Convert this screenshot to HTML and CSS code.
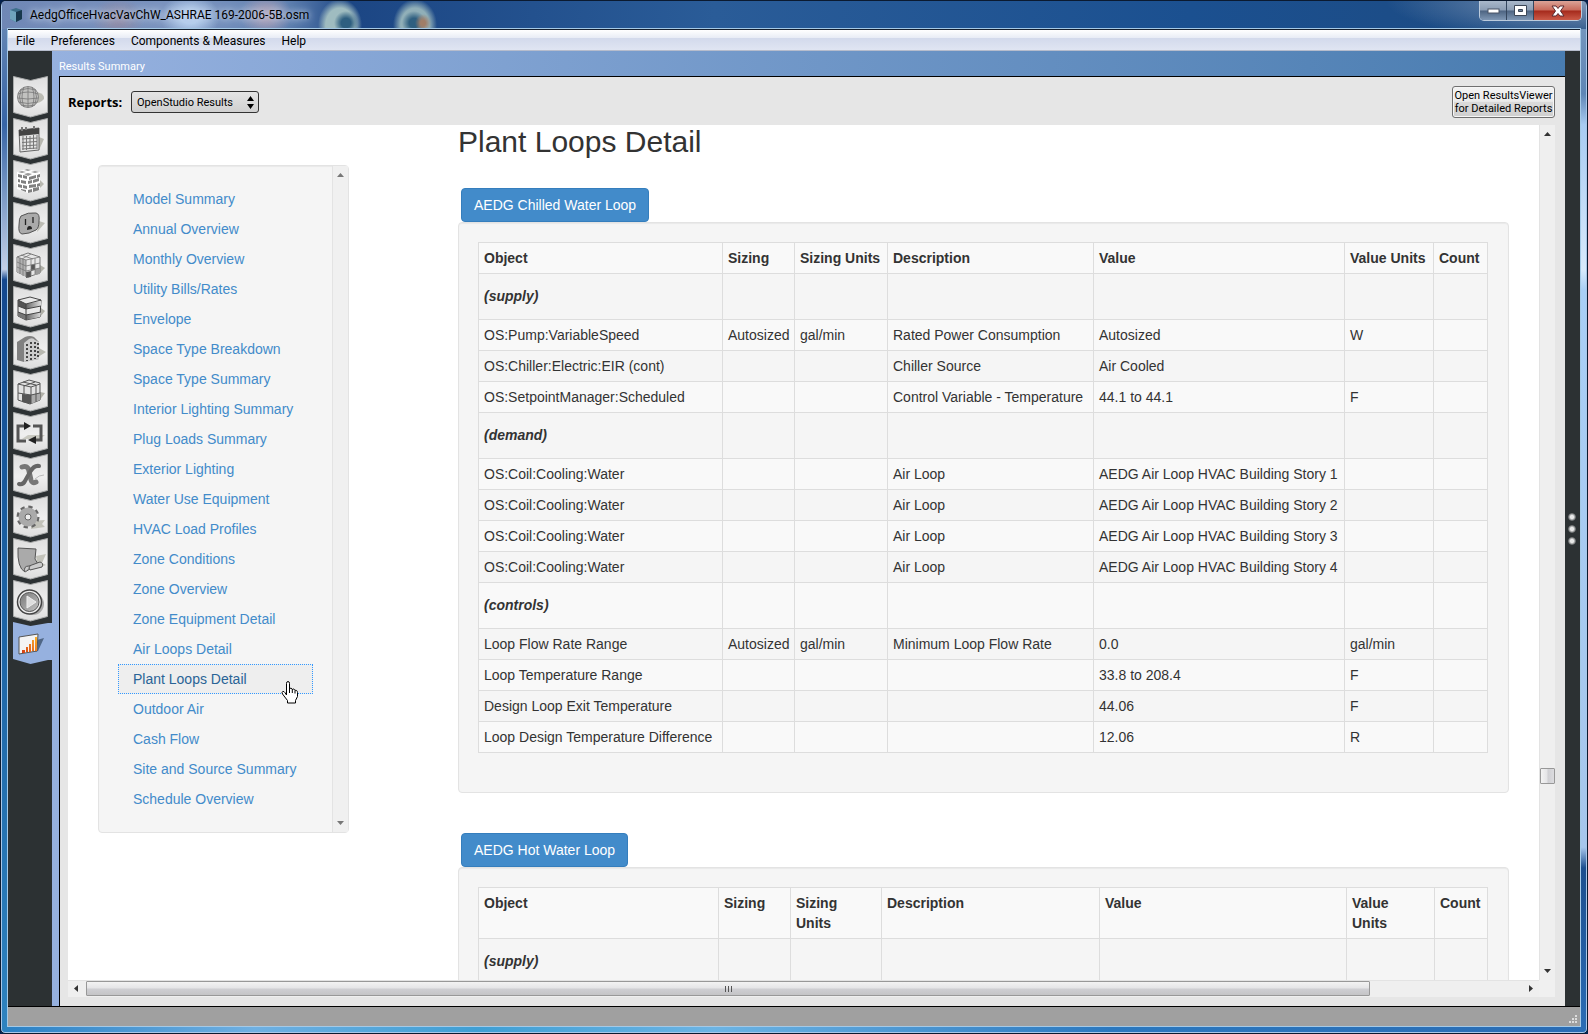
FILE: index.html
```html
<!DOCTYPE html>
<html lang="en">
<head>
  <meta charset="UTF-8" />
  <meta name="viewport" content="width=device-width, initial-scale=1" />
  <title>AedgOfficeHvacVavChW_ASHRAE 169-2006-5B.osm</title>
  <link rel="stylesheet" href="styles.css">
</head>
<body>
  <svg class="defs" width="0" height="0" aria-hidden="true">
    <defs>
      <linearGradient id="tabFill" x1="0" y1="0" x2="0" y2="1">
        <stop offset="0" stop-color="#dedede"/><stop offset=".55" stop-color="#efefef"/><stop offset="1" stop-color="#dcdcdc"/>
      </linearGradient>
      <linearGradient id="metal" x1="0" y1="0" x2="1" y2="1">
        <stop offset="0" stop-color="#777"/><stop offset="1" stop-color="#c4c4c4"/>
      </linearGradient>
      <linearGradient id="band" x1="0" y1="0" x2="1" y2="0">
        <stop offset="0" stop-color="#666"/><stop offset="1" stop-color="#ddd"/>
      </linearGradient>
      <linearGradient id="bars" x1="0" y1="1" x2="1" y2="0">
        <stop offset="0" stop-color="#d43a12"/><stop offset="1" stop-color="#fdb52b"/>
      </linearGradient>
      <path id="tab" d="M.5 .5 17.5 4.500 34.500 .5V36.500L17.500 41 .5 36.500Z" fill="url(#tabFill)" stroke="#a9abab"/>
    </defs>
  </svg>

  <div class="window">
    <header class="titlebar">
      <svg class="app-icon" viewBox="0 0 14 14"><path d="M1 2 7 0l6 2v9l-6 3-6-3Z" fill="#3d6f8a"/><path d="M1 2l6 2v10l-6-3Z" fill="#6fa5bd"/><path d="M7 4l6-2v9l-6 3Z" fill="#17384c"/></svg>
      <span class="title">AedgOfficeHvacVavChW_ASHRAE 169-2006-5B.osm</span>
      <div class="window-buttons">
        <button class="win-btn" aria-label="Minimize"><svg width="13" height="7"><rect x="1" y="2" width="11" height="4" fill="#fff" stroke="#4a5566"/></svg></button>
        <button class="win-btn" aria-label="Maximize"><svg width="13" height="11"><path d="M.5 .5h12v10H.5Z M4.500 4.500h4v2h-4Z" fill="#fff" fill-rule="evenodd" stroke="#3c4757"/></svg></button>
        <button class="win-btn close" aria-label="Close"><svg width="14" height="12"><path d="M1 1h4l2 2.500 2-2.500h4L9.500 6l3.500 5H9L7 8.500 5 11H1l3.500-5Z" fill="#fff" stroke="#5b2a30"/></svg></button>
      </div>
    </header>

    <div class="frame">
      <nav class="menubar">
        <a href="#">File</a>
        <a href="#">Preferences</a>
        <a href="#">Components &amp; Measures</a>
        <a href="#">Help</a>
      </nav>

      <div class="workspace">
        <aside class="tabs">
          <button class="tab" aria-label="Site"><svg viewBox="0 0 35 42"><use href="#tab"/><path d="M24 16q8 2 7 7-3 4-11 5Z" fill="#bcbcb4"/><circle cx="15" cy="21" r="10.500" fill="#c2c2c0" stroke="#888"/><path d="M5 18q10-4 20 0M4.500 22q10 2 21 0M5.500 26q9 3 19 0M8 29q7 2 14 0M7 14q8-3 16 0M15 10.500v21M11 11q-4 10 0 20M19 11q4 10 0 20M8 14q-3 7 0 14M22 14q3 7 0 14" fill="none" stroke="#777" stroke-width=".8"/></svg></button>
          <button class="tab" aria-label="Schedules"><svg viewBox="0 0 35 42"><use href="#tab"/><path d="M26 19l5 2-5 11Z" fill="#b8b8b0"/><path d="M6 12l20-2 0 22-19 2Z" fill="#e4e4e4" stroke="#666"/><path d="M6 12l20-2v6L6 18Z" fill="#444"/><path d="M9 13V9M13 12V9M21 11V8" stroke="#777" stroke-width="2"/><path d="M9 21l15-1M9 24.500l15-1M9 28l15-1M9 31l15-1M10 18v14M13.500 18v14M17 18v13M20.500 17v14M24 17v14" stroke="#777" stroke-width="1"/></svg></button>
          <button class="tab" aria-label="Constructions"><svg viewBox="0 0 35 42"><use href="#tab"/><path d="M26 19l5 5-7 7Z" fill="#b8b8b0"/><path d="M4 12l9-3 14 3v17l-12 4-11-4Z" fill="#fff"/><path d="M5 12l4-1 4 1-4 1ZM11 10l3-1 4 1-3 1ZM11 14l4-1 4 1-4 2ZM18 12l4-1 4 1-4 1Z" fill="#999"/><path d="M5 14l4 1v3l-4-1ZM10 15l4 1v3l-4-1ZM5 19l2 .5v3L5 22ZM8 20l5 1v3l-5-1ZM5 24l4 1v3l-4-1ZM10 25l4 1v3l-4-1ZM8 29l5 1v2l-5-2ZM16 17l7-2v3l-7 2ZM24 15l3-1v3l-3 1ZM15 21l4-1v3l-4 1ZM20 20l6-2v3l-6 2ZM16 25l7-1v3l-7 1ZM24 24l3-1v3l-3 1ZM15 30l4-1v3l-4 1ZM20 28l6-1v3l-6 2Z" fill="#808080"/></svg></button>
          <button class="tab" aria-label="Loads"><svg viewBox="0 0 35 42"><use href="#tab"/><path d="M26 19l6 2-8 9Z" fill="#bcbcb4"/><path d="M8 14q7-4 15-3 4 1 3 8 0 7-3 9-7 4-14 4-4-1-3-9 0-7 2-9Z" fill="#aaa" stroke="#555"/><path d="M12.500 17v6M20 15v6" stroke="#222" stroke-width="1.300"/><path d="M14 28q0-4 2.500-4t2.500 3Z" fill="#222"/></svg></button>
          <button class="tab" aria-label="Space Types"><svg viewBox="0 0 35 42"><use href="#tab"/><path d="M27 21l5 3-6 6Z" fill="#b0b0a8"/><path d="M4 13l11-4 12 4v16l-12 4-11-5Z" fill="#e6e6e6" stroke="#777"/><path d="M4 13l9 3v17L4 28Z" fill="#b2b2b2"/><path d="M13 28l5-1v6l-5 1ZM18 21l4-1v6l-4 1Z" fill="#555"/><path d="M22 25l5-1v6l-5 1Z" fill="#999"/><path d="M4 13l9 3 14-3M13 16v17M4 18l9 4 14-3M4 23l9 4 14-3M7 14v16M10 15v17M18 15v17M22 14v16M8 11l12 4M18 10l-9 5" fill="none" stroke="#777" stroke-width=".8"/></svg></button>
          <button class="tab" aria-label="Geometry"><svg viewBox="0 0 35 42"><use href="#tab"/><path d="M28 22l4 3-5 6Z" fill="#b0b0a8"/><path d="M5 14l12-3 11 3-1 17-14 3-8-4Z" fill="#e8e8e8" stroke="#444"/><path d="M5 14l8 4v5l-8-3Z" fill="#555"/><path d="M13 18l15-3v5l-15 3Z" fill="url(#band)"/><path d="M5 26l8 3v5l-8-4Z" fill="#777"/><path d="M13 29l15-3-1 5-14 3Z" fill="url(#band)"/><path d="M5 14l8 4 15-4M5 20l8 3 15-3M5 26l8 3 15-3M13 18v16" fill="none" stroke="#444"/></svg></button>
          <button class="tab" aria-label="Facility"><svg viewBox="0 0 35 42"><use href="#tab"/><path d="M26 20l7 4-8 5Z" fill="#b8b8b0"/><path d="M4 32V14l8-5q5-2 9 0l5 5v17l-15 3Z" fill="#808080"/><path d="M11 34V15l5-4q4-2 6 1l4 2v17Z" fill="#ccc"/><path d="M14 16v17M18 14v18M22 14v17M25 15v15" stroke="#444" stroke-width="2" stroke-dasharray="2 2"/></svg></button>
          <button class="tab" aria-label="Spaces"><svg viewBox="0 0 35 42"><use href="#tab"/><path d="M27 22l5 1-6 8Z" fill="#b0b0a8"/><path d="M5 14l11-4 11 3v17l-10 4-12-4Z" fill="#e2e2e2" stroke="#555"/><path d="M9 24l9 1v9l-9-2Z" fill="#555"/><path d="M18 25l9-2v7l-9 4Z" fill="#aaa"/><path d="M5 14l13 3 9-3M18 17v17M5 23l13 2 9-2M11 15v17M23 15v17M10 12l13 3M22 12l-11 4" fill="none" stroke="#555"/></svg></button>
          <button class="tab" aria-label="Thermal Zones"><svg viewBox="0 0 35 42"><use href="#tab"/><path d="M9 27h18l5-4H15Z" fill="#c8c8c0"/><path d="M12 14H5v15h8M20 14h8v14h-5" fill="none" stroke="#555" stroke-width="3"/><path d="M11 10l7 4-7 4ZM23 24l-8 4 8 4Z" fill="#222"/></svg></button>
          <button class="tab" aria-label="HVAC Systems"><svg viewBox="0 0 35 42"><use href="#tab"/><path d="M22 25q4-4 9-4" fill="none" stroke="#bbb"/><path d="M9 13q6-2 7 4l2 9q1 4 5 2" fill="none" stroke="#777" stroke-width="5" stroke-linecap="round"/><path d="M26 12q-5-1-9 6l-5 9q-2 4-6 3" fill="none" stroke="#666" stroke-width="4" stroke-linecap="round"/></svg></button>
          <button class="tab" aria-label="Simulation Settings"><svg viewBox="0 0 35 42"><use href="#tab"/><path d="M18 25l14-1-3 4 3 3-14 2Z" fill="#c2c2ba"/><circle cx="15" cy="21" r="9.500" fill="none" stroke="#666" stroke-width="4" stroke-dasharray="4 3.460"/><circle cx="15" cy="21" r="6" fill="none" stroke="#aaa" stroke-width="7"/><circle cx="15" cy="21" r="3" fill="#eee" stroke="#666"/></svg></button>
          <button class="tab" aria-label="Measures"><svg viewBox="0 0 35 42"><use href="#tab"/><path d="M23 18l10-2-4 9 4 2-8 3Z" fill="#c2c2ba"/><path d="M5 10l18 1-1 10 3 5-13 8Q4 30 5 10Z" fill="#aaa" stroke="#555"/><path d="M12 34q-2-6 4-6l11-4q4 1 2 5l-12 3q-2-2 0-4" fill="#ccc" stroke="#555"/></svg></button>
          <button class="tab" aria-label="Run Simulation"><svg viewBox="0 0 35 42"><use href="#tab"/><circle cx="20" cy="24" r="11" fill="#aaa"/><circle cx="16.500" cy="22" r="12" fill="#eee" stroke="#444" stroke-width="1.500"/><circle cx="16.500" cy="22" r="9.500" fill="url(#metal)" stroke="#555"/><path d="M14 16l9 6-9 6Z" fill="#ddd" stroke="#eee"/></svg></button>
          <button class="tab selected" aria-label="Results Summary"><svg viewBox="0 0 39 42"><path d="M0 0 17.500 4 35 1h4v37h-4L17.500 42 0 37Z" fill="#96b1df"/><path d="M24 18l7-2-6 13-3 1Z" fill="#4f6685"/><path d="M6 15l19-3-1 17-18 3Z" fill="#f4f4f4" stroke="#555"/><path d="M9 28h3v3H9ZM13 25h2v5h-2ZM16 22h2v8h-2ZM19 18h2v11h-2ZM22 15h2v14h-2Z" fill="url(#bars)"/></svg></button>
        </aside>

        <section class="results">
          <h1 class="results-title">Results Summary</h1>
          <div class="results-body">
            <div class="toolbar">
              <label for="report">Reports:</label>
              <span class="select-wrap">
                <select id="report"><option>OpenStudio Results</option></select>
                <svg width="7" height="13"><path d="M3.500 0 7 5H0ZM3.500 13 7 8H0Z"/></svg>
              </span>
              <button class="open-viewer">Open ResultsViewer<br>for Detailed Reports</button>
            </div>

            <div class="view">
              <div class="page">
                <nav class="toc">
                  <ul>
                    <li><a href="#">Model Summary</a></li>
                    <li><a href="#">Annual Overview</a></li>
                    <li><a href="#">Monthly Overview</a></li>
                    <li><a href="#">Utility Bills/Rates</a></li>
                    <li><a href="#">Envelope</a></li>
                    <li><a href="#">Space Type Breakdown</a></li>
                    <li><a href="#">Space Type Summary</a></li>
                    <li><a href="#">Interior Lighting Summary</a></li>
                    <li><a href="#">Plug Loads Summary</a></li>
                    <li><a href="#">Exterior Lighting</a></li>
                    <li><a href="#">Water Use Equipment</a></li>
                    <li><a href="#">HVAC Load Profiles</a></li>
                    <li><a href="#">Zone Conditions</a></li>
                    <li><a href="#">Zone Overview</a></li>
                    <li><a href="#">Zone Equipment Detail</a></li>
                    <li><a href="#">Air Loops Detail</a></li>
                    <li><a href="#plant-loops" class="active">Plant Loops Detail</a>
                      <svg class="cursor" width="18" height="23" viewBox="0 0 18 23"><path d="M5.500 14V2.500q0-2 1.500-2t1.500 2V8q.5-1 1.500-.8 1.200.2 1.300 1.500.6-1 1.600-.6 1 .4 1.100 1.600.7-.8 1.600-.2.900.7.900 2v4l-2 4v2.500h-8V19.500L1.500 13q-1-2 .3-2.600 1.200-.3 2.200 1.300Z" fill="#fff" stroke="#000"/><path d="M8.500 8v4M11.300 8.500V12M14 10v2.500" stroke="#000"/></svg>
                    </li>
                    <li><a href="#">Outdoor Air</a></li>
                    <li><a href="#">Cash Flow</a></li>
                    <li><a href="#">Site and Source Summary</a></li>
                    <li><a href="#">Schedule Overview</a></li>
                  </ul>
                  <div class="toc-scroll">
                    <svg width="7" height="4"><path d="M0 4 3.500 0 7 4Z"/></svg>
                    <svg width="7" height="4"><path d="M0 0 3.500 4 7 0Z"/></svg>
                  </div>
                </nav>

                <main class="report" id="plant-loops">
                  <h2>Plant Loops Detail</h2>

                  <section class="loop">
                    <button class="loop-btn">AEDG Chilled Water Loop</button>
                    <div class="well">
                      <table class="chilled">
                        <colgroup><col class="c-object"><col class="c-sizing"><col class="c-sunits"><col class="c-desc"><col class="c-value"><col class="c-vunits"><col class="c-count"></colgroup>
                        <thead>
                          <tr><th>Object</th><th>Sizing</th><th>Sizing Units</th><th>Description</th><th>Value</th><th>Value Units</th><th>Count</th></tr>
                        </thead>
                        <tbody>
                          <tr class="group"><td>(supply)</td><td></td><td></td><td></td><td></td><td></td><td></td></tr>
                          <tr><td>OS:Pump:VariableSpeed</td><td>Autosized</td><td>gal/min</td><td>Rated Power Consumption</td><td>Autosized</td><td>W</td><td></td></tr>
                          <tr><td>OS:Chiller:Electric:EIR (cont)</td><td></td><td></td><td>Chiller Source</td><td>Air Cooled</td><td></td><td></td></tr>
                          <tr><td>OS:SetpointManager:Scheduled</td><td></td><td></td><td>Control Variable - Temperature</td><td>44.1 to 44.1</td><td>F</td><td></td></tr>
                          <tr class="group"><td>(demand)</td><td></td><td></td><td></td><td></td><td></td><td></td></tr>
                          <tr><td>OS:Coil:Cooling:Water</td><td></td><td></td><td>Air Loop</td><td>AEDG Air Loop HVAC Building Story 1</td><td></td><td></td></tr>
                          <tr><td>OS:Coil:Cooling:Water</td><td></td><td></td><td>Air Loop</td><td>AEDG Air Loop HVAC Building Story 2</td><td></td><td></td></tr>
                          <tr><td>OS:Coil:Cooling:Water</td><td></td><td></td><td>Air Loop</td><td>AEDG Air Loop HVAC Building Story 3</td><td></td><td></td></tr>
                          <tr><td>OS:Coil:Cooling:Water</td><td></td><td></td><td>Air Loop</td><td>AEDG Air Loop HVAC Building Story 4</td><td></td><td></td></tr>
                          <tr class="group"><td>(controls)</td><td></td><td></td><td></td><td></td><td></td><td></td></tr>
                          <tr><td>Loop Flow Rate Range</td><td>Autosized</td><td>gal/min</td><td>Minimum Loop Flow Rate</td><td>0.0</td><td>gal/min</td><td></td></tr>
                          <tr><td>Loop Temperature Range</td><td></td><td></td><td></td><td>33.8 to 208.4</td><td>F</td><td></td></tr>
                          <tr><td>Design Loop Exit Temperature</td><td></td><td></td><td></td><td>44.06</td><td>F</td><td></td></tr>
                          <tr><td>Loop Design Temperature Difference</td><td></td><td></td><td></td><td>12.06</td><td>R</td><td></td></tr>
                        </tbody>
                      </table>
                    </div>
                  </section>

                  <section class="loop">
                    <button class="loop-btn">AEDG Hot Water Loop</button>
                    <div class="well">
                      <table class="hot">
                        <colgroup><col class="c-object"><col class="c-sizing"><col class="c-sunits"><col class="c-desc"><col class="c-value"><col class="c-vunits"><col class="c-count"></colgroup>
                        <thead>
                          <tr><th>Object</th><th>Sizing</th><th>Sizing<br>Units</th><th>Description</th><th>Value</th><th>Value<br>Units</th><th>Count</th></tr>
                        </thead>
                        <tbody>
                          <tr class="group"><td>(supply)</td><td></td><td></td><td></td><td></td><td></td><td></td></tr>
                        </tbody>
                      </table>
                    </div>
                  </section>
                </main>
              </div>

              <div class="vscroll">
                <svg width="7" height="4"><path d="M0 4 3.500 0 7 4Z"/></svg>
                <span class="vtrack"><span class="vthumb"></span></span>
                <svg width="7" height="4"><path d="M0 0 3.500 4 7 0Z"/></svg>
              </div>
              <div class="hscroll">
                <svg width="4" height="7"><path d="M4 0 0 3.500 4 7Z"/></svg>
                <span class="htrack"><span class="hthumb"><svg width="9" height="6"><path d="M1.500 0v6M4.500 0v6M7.500 0v6" stroke="#555"/></svg></span></span>
                <svg width="4" height="7"><path d="M0 0 4 3.500 0 7Z"/></svg>
              </div>
              <div class="corner"></div>
            </div>
          </div>
        </section>

        <div class="drawer-handle"><i></i><i></i><i></i></div>
      </div>

      <footer class="statusbar">
        <svg width="9" height="9"><path d="M6 0h2v2H6ZM3 3h2v2H3ZM6 3h2v2H6ZM0 6h2v2H0ZM3 6h2v2H3ZM6 6h2v2H6Z" fill="#ddd"/></svg>
      </footer>
    </div>
  </div>
</body>
</html>
```
FILE: styles.css
```css
* {
  box-sizing: border-box;
}

body {
  margin: 0;
  background: #04204c;
  font-family: "Liberation Sans", Arial, sans-serif;
  font-size: 14px;
  line-height: 20px;
  color: #333;
}

button,
select {
  margin: 0;
  padding: 0;
  font: inherit;
  color: inherit;
}

.defs {
  display: block;
}

/* window frame */
.window {
  height: 100vh;
  display: flex;
  flex-direction: column;
  padding: 0 7px 7px;
  border: 1px solid #0b1a30;
  border-radius: 6px 6px 5px 5px;
  box-shadow: inset 0 0 0 1px #a9c7e8;
  overflow: hidden;
  background:
    linear-gradient(#6f8db6, #3765a6 12%, #c3d0e6 26%, #14488e 27%, #1a5c9e 50%, #2e83c0) left / 8px 100% no-repeat,
    linear-gradient(#7b9bc0, #5f86b5 9%, #a8cbf2 12%, #d8eafc 26%, #a9cff6 28%, #a6c6ec 82%, #1d4f8f 84%, #2b6db6) right / 8px 100% no-repeat,
    linear-gradient(90deg, #2a80c4, #6fb0e2 16%, #3f9fd4 30%, #6cb4e4 45%, #2b78bf 70%, #2a6cb4) bottom / 100% 8px no-repeat,
    #1b4c8a;
}

.titlebar {
  flex: none;
  display: flex;
  align-items: center;
  height: 28px;
  margin: 0 -6px;
  padding: 0 4px 0 7px;
  background:
    radial-gradient(ellipse 12px 12px at 344px 22px, #2f5f80 40%, transparent),
    radial-gradient(ellipse 22px 26px at 338px 24px, #9fbcc0 65%, transparent),
    radial-gradient(ellipse 8px 9px at 421px 22px, #a07e68 30%, transparent),
    radial-gradient(ellipse 12px 12px at 412px 22px, #2f5f80 40%, transparent),
    radial-gradient(ellipse 22px 26px at 413px 24px, #90afb8 65%, transparent),
    radial-gradient(ellipse 26px 22px at 264px 14px, #a99fb8 20%, transparent),
    radial-gradient(ellipse 30px 22px at 188px 16px, #b4cdec 30%, transparent),
    radial-gradient(ellipse 26px 22px at 116px 18px, #8e8ba8 20%, transparent),
    radial-gradient(ellipse 200px 40px at 100% 0, #8199b8, transparent),
    linear-gradient(90deg, #6f87b5, #7c95c0 12%, #5f80b0 18%, #1c4684 22%, #2a5c98 45%, #1b5090 75%, #1d4a80);
}

.app-icon {
  width: 14px;
  height: 14px;
}

.title {
  flex: 1;
  margin-left: 7px;
  font: 12px/16px Roboto, "Open Sans", sans-serif;
  color: #000;
  text-shadow: 0 0 6px #c9d6ea, 0 0 8px #c9d6ea;
}

.window-buttons {
  align-self: flex-start;
  display: flex;
  height: 20px;
  border: 1px solid #bccbdc;
  border-top: 0;
  border-radius: 0 0 5px 5px;
  overflow: hidden;
}

.win-btn {
  display: flex;
  align-items: center;
  justify-content: center;
  width: 27px;
  border: 0;
  border-right: 1px solid #34465e;
  background: linear-gradient(#a9b8ca, #8b9db4 48%, #4d6482 52%, #7f97b4);
}

.win-btn.close {
  width: 47px;
  border-right: 0;
  background: linear-gradient(#dba397, #c86a5b 48%, #a52a1c 52%, #cb5a48);
}

.frame {
  flex: 1;
  min-height: 0;
  display: flex;
  flex-direction: column;
  border-top: 1px solid #16202e;
  box-shadow: 0 0 0 1px #a5c9e6;
}

.menubar {
  flex: none;
  display: flex;
  gap: 16px;
  height: 21px;
  padding: 0 8px;
  border-bottom: 1px solid #b6bccc;
  background: linear-gradient(#fff, #e9edf6 38%, #d3daec 42%, #e0e5f2);
  font: 12px/22px Roboto, "Open Sans", sans-serif;
}

.menubar a {
  color: #000;
  text-decoration: none;
}

.workspace {
  flex: 1;
  min-height: 0;
  display: flex;
  background: #2c3133;
}

/* vertical tabs */
.tabs {
  flex: none;
  width: 44px;
  padding: 25px 0 0 5px;
}

.tab {
  display: block;
  width: 35px;
  height: 42px;
  border: 0;
  background: none;
}

.tab.selected {
  width: 39px;
}

.tab svg {
  display: block;
}

/* results pane */
.results {
  flex: 1;
  min-width: 0;
  display: flex;
  flex-direction: column;
  padding-left: 7px;
  background: linear-gradient(90deg, #96b1df, #497cb0);
}

.results-title {
  flex: none;
  height: 25px;
  margin: 0;
  font: 11px/32px Roboto, "Open Sans", sans-serif;
  color: #fff;
}

.results-body {
  flex: 1;
  min-height: 0;
  display: flex;
  flex-direction: column;
  padding: 0 10px 9px 8px;
  border-top: 1px solid #000;
  border-left: 1px solid #000;
  background: #e6e6e6;
}

.toolbar {
  flex: none;
  display: flex;
  align-items: center;
  height: 48px;
  padding-top: 2px;
  font: 11px/13px Roboto, "Open Sans", sans-serif;
  color: #000;
}

.toolbar label {
  width: 63px;
  font-family: "Open Sans", sans-serif;
  font-size: 13px;
  font-weight: bold;
}

.select-wrap {
  position: relative;
  width: 128px;
}

.select-wrap select {
  display: block;
  width: 100%;
  height: 22px;
  padding: 0 5px;
  border: 1px solid #333;
  border-radius: 3px;
  appearance: none;
  background: linear-gradient(#e4e4e4, #d0d0d0);
}

.select-wrap svg {
  position: absolute;
  right: 5px;
  top: 5px;
  pointer-events: none;
}

.open-viewer {
  width: 103px;
  height: 32px;
  margin-left: auto;
  border: 1px solid #707070;
  border-radius: 3px;
  background: linear-gradient(#f2f2f2, #ebebeb 48%, #dadada 50%, #cfcfcf);
  box-shadow: inset 0 0 0 1px #f6f6f6;
  white-space: nowrap;
}

.view {
  flex: 1;
  min-height: 0;
  display: grid;
  grid-template-columns: minmax(0, 1fr) 16px;
  grid-template-rows: minmax(0, 1fr) 17px;
  background: #fff;
}

.page {
  display: flex;
  align-items: flex-start;
  overflow: hidden;
  padding: 0 30px;
}

/* contents list */
.toc {
  flex: none;
  display: flex;
  width: 251px;
  margin-top: 40px;
  border: 1px solid #e3e3e3;
  border-radius: 4px;
  background: #f5f5f5;
  box-shadow: inset 0 1px 1px rgba(0, 0, 0, 0.05);
}

.toc ul {
  flex: 1;
  margin: 0;
  padding: 18px 19px;
  list-style: none;
}

.toc li {
  position: relative;
}

.toc a {
  display: block;
  padding: 5px 15px;
  color: #428bca;
  text-decoration: none;
}

.toc a.active {
  background: #eee;
  color: #2a6496;
  outline: 1px dotted #3399ff;
  outline-offset: -1px;
}

.cursor {
  position: absolute;
  right: 14px;
  top: 17px;
  z-index: 1;
}

.toc-scroll {
  display: flex;
  flex-direction: column;
  justify-content: space-between;
  align-items: center;
  width: 16px;
  padding: 7px 0;
  border-left: 1px solid #e3e3e3;
  background: #f0f0f0;
  fill: #777;
}

/* report */
.report {
  flex: 1;
  min-width: 0;
  margin-left: 109px;
}

.report h2 {
  margin: 0 0 30px;
  font-size: 30px;
  font-weight: normal;
  line-height: 33px;
}

.loop {
  margin-bottom: 40px;
}

.loop-btn {
  display: block;
  height: 34px;
  margin-left: 3px;
  padding: 0 12px;
  border: 1px solid #357ebd;
  border-radius: 4px;
  background: #428bca;
  color: #fff;
}

.well {
  padding: 19px 20px 39px 19px;
  border: 1px solid #e3e3e3;
  border-radius: 4px;
  background: #f5f5f5;
  box-shadow: inset 0 1px 1px rgba(0, 0, 0, 0.05);
}

table {
  width: 100%;
  table-layout: fixed;
  border-collapse: collapse;
}

th,
td {
  height: 31px;
  padding: 5px;
  border: 1px solid #ddd;
  text-align: left;
  vertical-align: top;
  white-space: nowrap;
}

thead tr,
tbody tr:nth-child(even) {
  background: #f9f9f9;
}

.group td {
  height: 46px;
  padding-top: 12px;
  font-weight: bold;
  font-style: italic;
}

.c-object { width: 244px; }
.c-sizing { width: 72px; }
.c-sunits { width: 93px; }
.c-desc { width: 206px; }
.c-value { width: 251px; }
.c-vunits { width: 89px; }
.c-count { width: 54px; }

.hot .c-object { width: 240px; }
.hot .c-sunits { width: 91px; }
.hot .c-desc { width: 218px; }
.hot .c-value { width: 247px; }
.hot .c-vunits { width: 88px; }
.hot .c-count { width: 53px; }

/* scrollbars */
.vscroll,
.hscroll {
  display: flex;
  align-items: center;
  background: #efefef;
  fill: #333;
}

.vscroll {
  flex-direction: column;
  padding: 7px 0;
  border-left: 1px solid #e3e3e3;
}

.vtrack {
  flex: 1;
  display: flex;
  flex-direction: column;
  width: 100%;
  padding-top: 632px;
}

.vthumb {
  height: 16px;
  border: 1px solid #989898;
  border-radius: 1px;
  background: linear-gradient(90deg, #f3f3f3, #e4e4e6 48%, #cfcfd3 52%, #dcdcdf);
}

.hscroll {
  padding: 0 6px 1px;
  border-top: 1px solid #e3e3e3;
}

.htrack {
  flex: 1;
  height: 100%;
  padding: 0 159px 0 8px;
}

.hthumb {
  display: flex;
  align-items: center;
  justify-content: center;
  height: 15px;
  border: 1px solid #989898;
  border-radius: 1px;
  background: linear-gradient(#f3f3f3, #e4e4e6 48%, #cfcfd3 52%, #c4c4c6);
}

.corner {
  background: #f0f0f0;
}

.drawer-handle {
  flex: none;
  display: flex;
  flex-direction: column;
  align-items: center;
  justify-content: center;
  gap: 4px;
  width: 15px;
  padding-right: 1px;
}

.drawer-handle i {
  width: 8px;
  height: 8px;
  border-radius: 50%;
  background: radial-gradient(#e8e8e8 30%, #2c3133 80%);
}

.statusbar {
  flex: none;
  display: flex;
  align-items: flex-end;
  justify-content: flex-end;
  height: 20px;
  padding: 0 2px 2px;
  border-top: 1px solid #000;
  background: #a0a0a0;
}
```
